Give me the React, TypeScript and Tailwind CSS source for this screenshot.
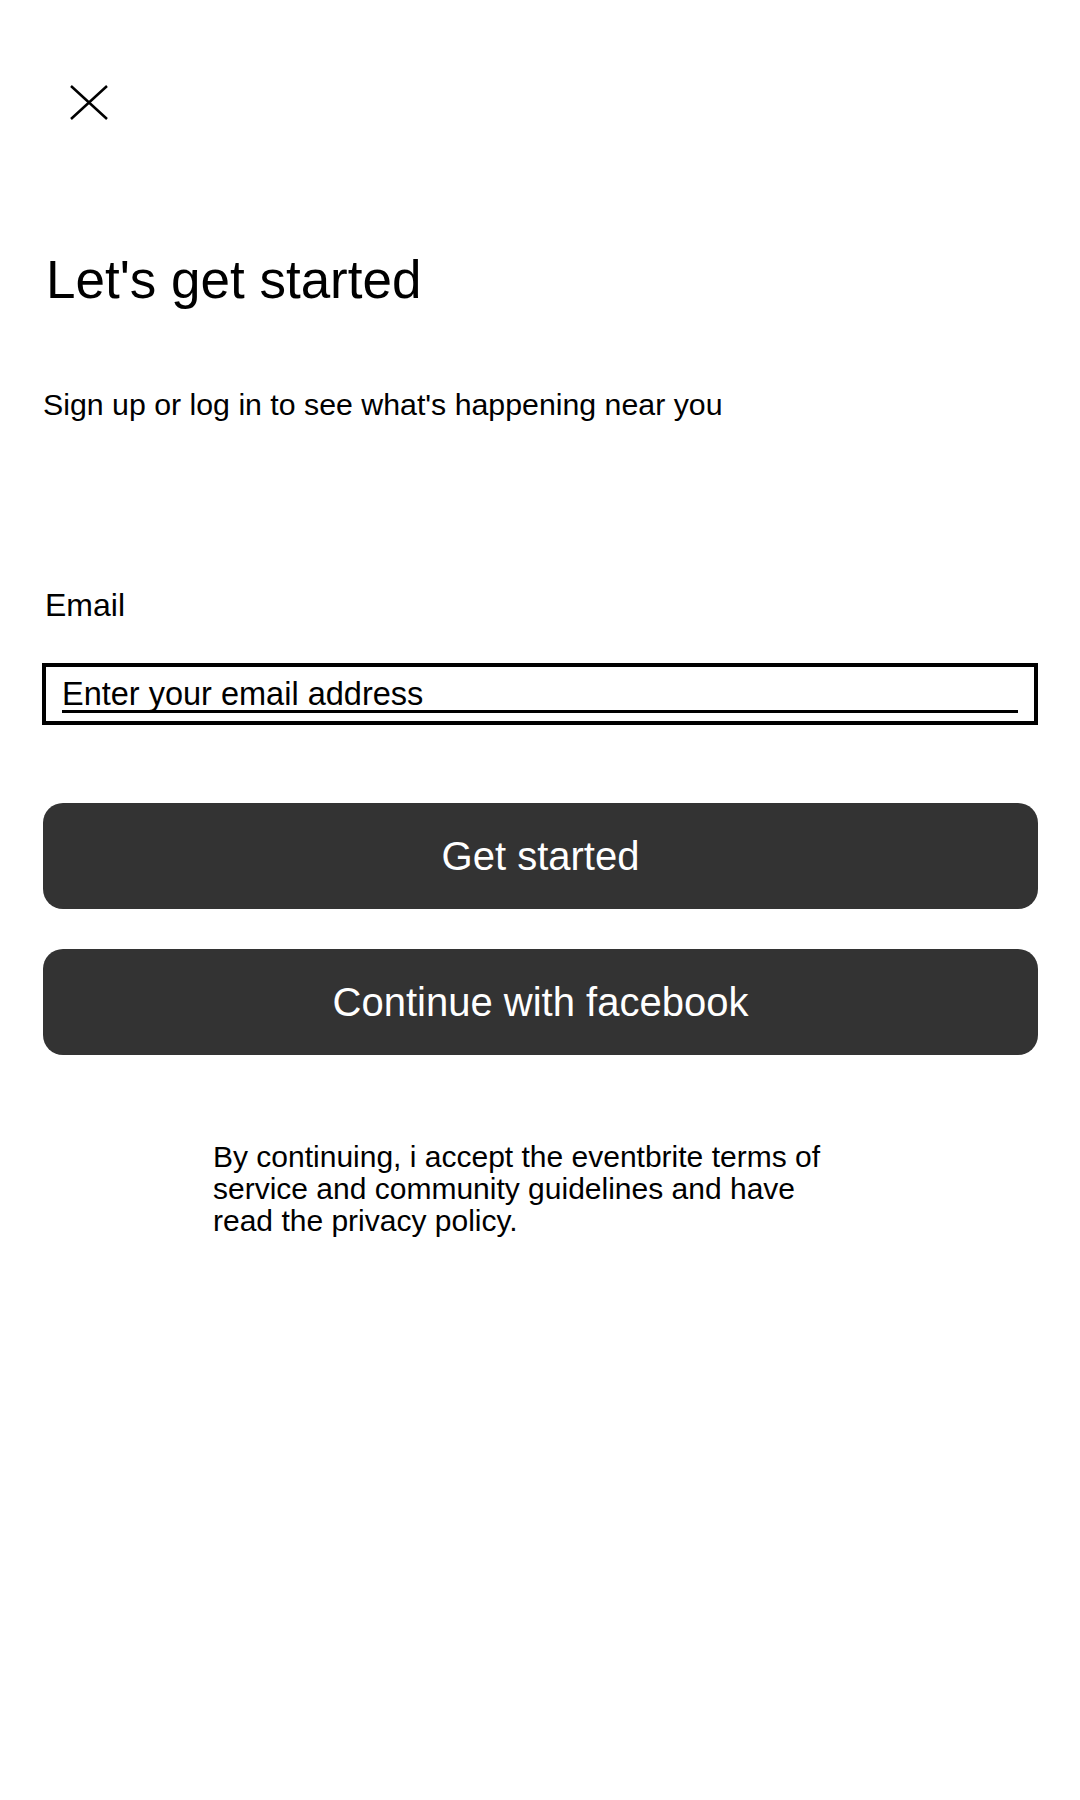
import React, { useState } from 'react';

const CloseIcon: React.FC = () => (
  <svg width="38" height="35" viewBox="0 0 38 35" fill="none" stroke="#000" strokeWidth={2.5}>
    <path d="M1 1 L37 34 M37 1 L1 34" />
  </svg>
);

export default function App() {
  const [email, setEmail] = useState('');

  return (
    <div
      className="min-h-[1800px] w-[1080px] bg-white px-[42px] text-black"
      style={{ fontFamily: '"Liberation Sans", Arial, sans-serif' }}
    >
      <button className="ml-[28px] mt-[85px] block">
        <CloseIcon />
      </button>

      <h1 className="mt-[133px] pl-[4px] text-[53px] leading-[53px] font-normal">Let's get started</h1>

      <p className="mt-[84px] pl-[1px] text-[30.3px] leading-[30px]">
        Sign up or log in to see what's happening near you
      </p>

      <label className="mt-[169px] block pl-[3px] text-[32px] leading-[32px]">Email</label>

      <div className="mt-[42px] border-4 border-black px-4 pt-[12px] pb-2">
        <input
          type="email"
          value={email}
          onChange={(e) => setEmail(e.target.value)}
          placeholder="Enter your email address"
          className="block h-[34px] w-full border-b-[3px] border-black text-[32.5px] leading-[31px] outline-none placeholder:text-black"
        />
      </div>

      <button className="ml-[1px] mt-[78px] flex h-[106px] w-[995px] items-center justify-center rounded-[20px] bg-[#333333] text-[40px] text-white">
        Get started
      </button>

      <button className="ml-[1px] mt-[40px] flex h-[106px] w-[995px] items-center justify-center rounded-[20px] bg-[#333333] text-[40px] text-white">
        Continue with facebook
      </button>

      <p className="ml-[171px] mt-[86px] w-[630px] text-[30px] leading-[32px]">
        By continuing, i accept the eventbrite terms of service and community guidelines and have read
        the privacy policy.
      </p>
    </div>
  );
}
